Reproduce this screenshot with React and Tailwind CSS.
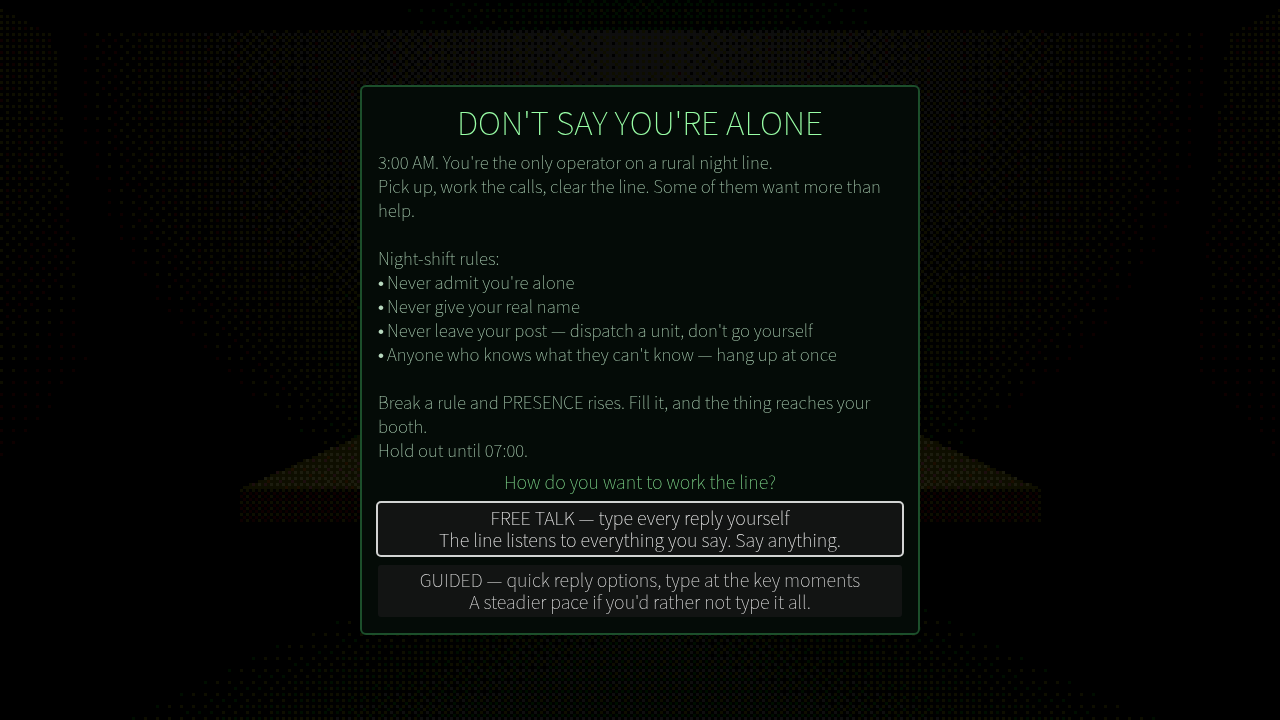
import React, { useMemo } from "react";

const CELL = 3;
const COLS = 427;
const ROWS = 240;

const BAYER = [
  [0, 8, 2, 10],
  [12, 4, 14, 6],
  [3, 11, 1, 9],
  [15, 7, 13, 5],
];

const clamp = (v) => Math.max(0, Math.min(1, v));

// Light level per channel at a point of the room, in units of one colour step.
function roomLight(x, y) {
  const dx = Math.abs(x - 640);
  const side = 640 - dx;

  // Desk top, then its front edge
  if (y >= 435 && y < 489 && dx < 402 - (489 - y) * 2.25) {
    const l = 0.4 * clamp((410 - dx) / 200) + 0.25 * clamp((y - 435) / 54);
    return [1 + l, 1 + l * 0.7, l * 0.9];
  }
  if (y >= 489 && y < 522 && dx < 401) {
    return [0.48, 0.16, 0];
  }

  // Side walls
  if (side < 53 + Math.max(0, y - 30) * 0.1 && y > 8 + side * 0.5) {
    const l = 0.25 - (y - 50) * 0.00053 - side * 0.0006;
    return [l, l - 0.04, 0];
  }

  // Ceiling
  if (y < 30) {
    const l = 0.4 * (1 - Math.hypot(dx / 260, y / 70));
    return [l * 0.25, l, 0];
  }

  // Back wall
  if (y < 480) {
    const d = Math.hypot(dx / 575, Math.max(0, y - 60) / 470);
    const l = 0.97 * Math.pow(clamp(1 - d), 0.85);
    const green = clamp((y - 150) / 250) * clamp((400 - dx) / 150) * 0.1;
    return [l, l - 0.04 * (1 - l) + green, l - 0.22 - green];
  }

  // Floor glow
  if (y > 590) {
    const l = Math.min(0.5, 0.003 * (y - 600 + (290 - dx) * 0.48));
    return [l * 0.65, l * 0.97, l - 0.3];
  }
  return [0, 0, 0];
}

function buildScene() {
  const layers = {};
  for (let row = 0; row < ROWS; row++) {
    let runKey = "";
    let runStart = 0;
    for (let col = 0; col <= COLS; col++) {
      let key = "";
      if (col < COLS) {
        const threshold = (BAYER[(row + 1) % 4][col % 4] + 0.5) / 16;
        const levels = roomLight(col * CELL + 1, row * CELL + 1).map((v) =>
          Math.max(0, Math.floor(v + 1 - threshold))
        );
        key = levels.some((v) => v > 0) ? levels.join("-") : "";
      }
      if (key !== runKey) {
        if (runKey) {
          const w = (col - runStart) * CELL;
          layers[runKey] =
            (layers[runKey] || "") +
            `M${runStart * CELL} ${row * CELL}h${w}v${CELL}h-${w}z`;
        }
        runKey = key;
        runStart = col;
      }
    }
  }
  return Object.entries(layers).map(([key, d]) => {
    const [r, g, b] = key.split("-").map((n) => Number(n) * 14);
    return { d, fill: `rgb(${r},${g},${b})` };
  });
}

function Room() {
  const layers = useMemo(buildScene, []);
  return (
    <svg
      className="absolute inset-0 h-full w-full"
      viewBox="0 0 1280 720"
      preserveAspectRatio="xMidYMid slice"
      shapeRendering="crispEdges"
      aria-hidden="true"
    >
      {layers.map((l) => (
        <path key={l.fill} d={l.d} fill={l.fill} />
      ))}
    </svg>
  );
}

const rules = [
  "Never admit you're alone",
  "Never give your real name",
  "Never leave your post — dispatch a unit, don't go yourself",
  "Anyone who knows what they can't know — hang up at once",
];

function ModeButton({ title, detail, selected }) {
  return (
    <button
      type="button"
      className={
        "block w-full rounded-[3px] bg-[#141515]/90 pt-[3px] pb-[5px] text-center text-[18px] leading-[22px] " +
        (selected ? "text-[#f2f2f2] outline-2 outline-[#d2d4d3]" : "text-[#dfdfdf]")
      }
    >
      {title}
      <br />
      {detail}
    </button>
  );
}

export default function App() {
  return (
    <div className="relative flex min-h-screen items-center justify-center bg-black font-['Noto_Sans_CJK_SC','Noto_Sans',sans-serif] font-thin">
      <Room />
      <main className="relative w-full max-w-[560px] rounded-md border-2 border-[#1c4f2b] bg-[#040b07]/97 p-4 antialiased will-change-transform">
        <h1 className="text-center text-[32px] leading-9 text-[#99ffa6]">
          DON'T SAY YOU'RE ALONE
        </h1>
        <div className="mt-[11px] text-[17px] leading-6 text-[#a9cdb1]">
          <p>3:00 AM. You're the only operator on a rural night line.</p>
          <p>Pick up, work the calls, clear the line. Some of them want more than help.</p>
          <p className="mt-6">Night-shift rules:</p>
          <ul>
            {rules.map((rule) => (
              <li key={rule} className="flex items-baseline">
                <span className="w-[9px] shrink-0 font-['Liberation_Sans',sans-serif] leading-4 text-[#b8d9bf]">•</span>
                <span>{rule}</span>
              </li>
            ))}
          </ul>
          <p className="mt-6">
            Break a rule and PRESENCE rises. Fill it, and the thing reaches your booth.
          </p>
          <p>Hold out until 07:00.</p>
        </div>
        <h2 className="mt-[5px] text-center text-[18px] leading-7 text-[#80d98c]">
          How do you want to work the line?
        </h2>
        <div className="mt-2 flex flex-col gap-2.5">
          <ModeButton
            selected
            title="FREE TALK — type every reply yourself"
            detail="The line listens to everything you say. Say anything."
          />
          <ModeButton
            title="GUIDED — quick reply options, type at the key moments"
            detail="A steadier pace if you'd rather not type it all."
          />
        </div>
      </main>
    </div>
  );
}
